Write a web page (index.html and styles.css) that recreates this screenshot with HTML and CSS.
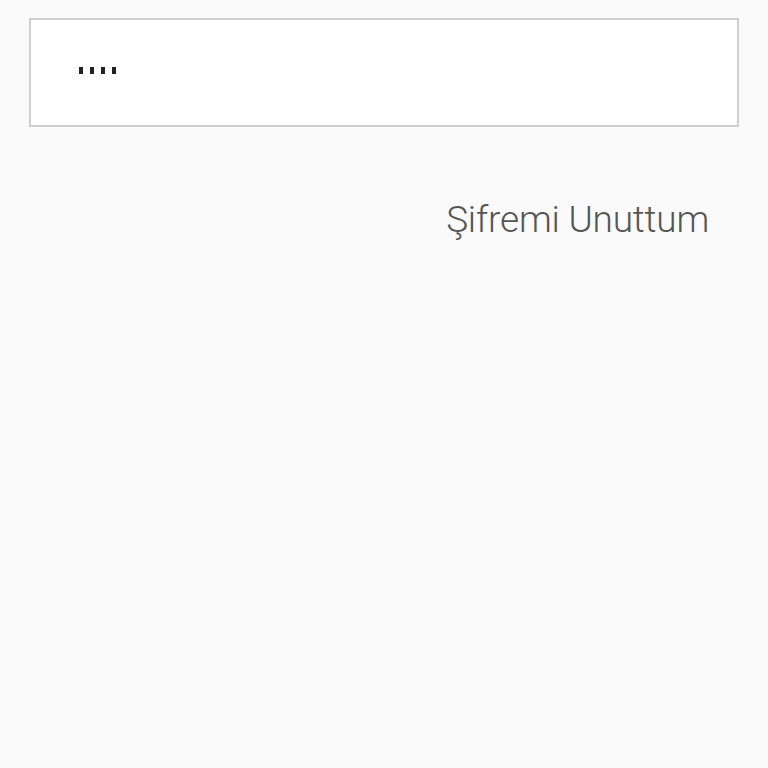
FILE: index.html
```html
<!DOCTYPE html>
<html lang="tr">
<head>
  <meta charset="UTF-8" />
  <meta name="viewport" content="width=device-width, initial-scale=1.0" />
  <title>Giriş</title>
  <link rel="stylesheet" href="styles.css">
</head>
<body>
  <div class="login">
    <div class="password-field" aria-label="Şifre">
      <span class="dot"></span><span class="dot"></span><span class="dot"></span><span class="dot"></span>
    </div>
    <div class="forgot">
      <a href="#" class="forgot-link">Şifremi Unuttum</a>
    </div>
  </div>
</body>
</html>
```

FILE: styles.css
```css
body {
  margin: 0;
  background-color: #fafafa;
  font-family: Roboto, 'Noto Sans', sans-serif;
  min-height: 100vh;
}

.login {
  padding: 18px 29px 0 29px;
}

.password-field {
  height: 109px;
  background-color: #fff;
  border: 2px solid #cfcfcf;
  display: flex;
  align-items: center;
  gap: 7px;
  padding: 0 0 4px 48px;
  box-sizing: border-box;
}

.dot {
  width: 4px;
  height: 7px;
  background-color: #222;
}

.forgot {
  display: flex;
  justify-content: flex-end;
  padding: 71px 30px 0 0;
}

.forgot-link {
  color: #555;
  font-size: 37px;
  font-weight: 300;
  text-decoration: none;
  letter-spacing: -0.2px;
}
```
